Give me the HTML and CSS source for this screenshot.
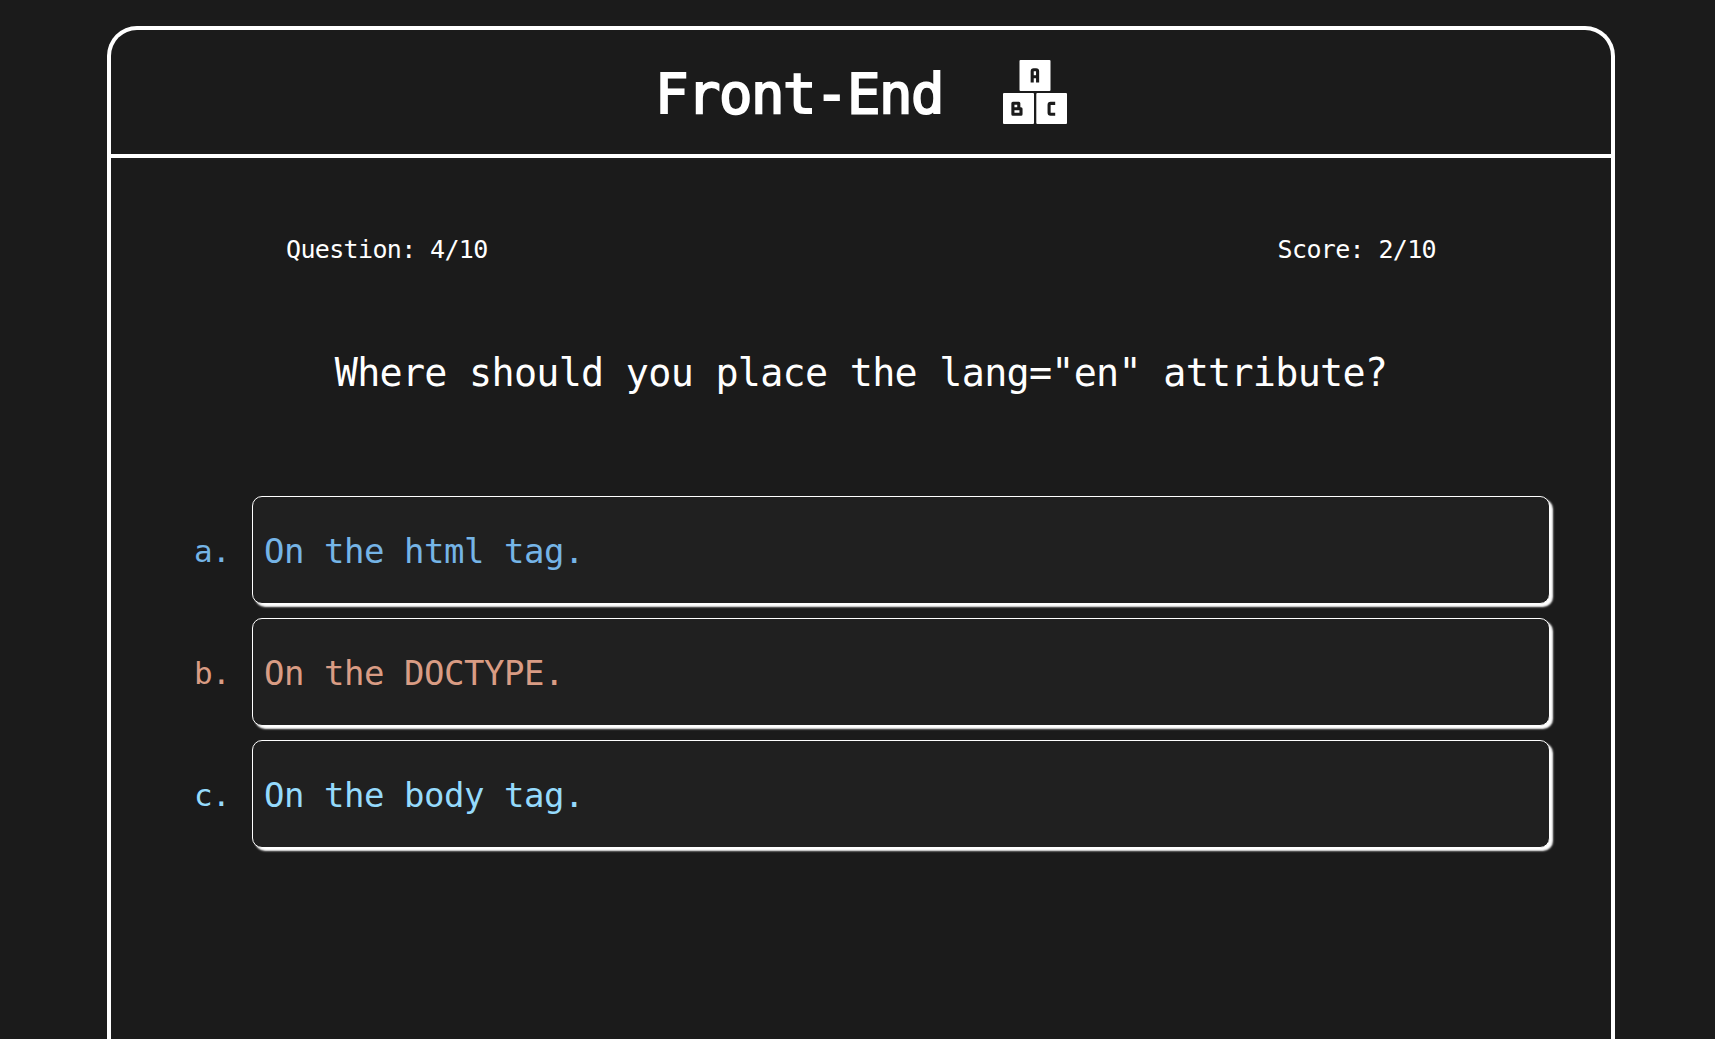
FILE: index.html
```html
<!DOCTYPE html>
<html lang="en">
<head>
<meta charset="utf-8">
<title>Front-End Quiz</title>
<link rel="stylesheet" href="styles.css">
</head>
<body>
<main class="quiz">
  <header class="quiz-header">
    <h1 class="title">Front-End</h1>
    <svg class="blocks" viewBox="0 0 64 64" aria-hidden="true">
      <g fill="#fff">
        <rect x="16.5" y="0" width="31" height="31" rx="1"/>
        <rect x="0" y="33" width="31" height="31" rx="1"/>
        <rect x="33.3" y="33" width="30.7" height="31" rx="1"/>
      </g>
      <g fill="none" stroke="#1b1b1b" stroke-width="3.1" stroke-linejoin="round">
        <path d="M29.2 22.4V11.2Q29.2 9.7 30.7 9.7H33.1Q34.6 9.7 34.6 11.2V22.4M29.2 16.8H34.6"/>
        <path d="M9.9 43.3H15.8V48.7M9.9 43.3V54.2H18V48.7H9.9Z"/>
        <path d="M52.2 43.4H47.6Q46.1 43.4 46.1 44.9V52.7Q46.1 54.2 47.6 54.2H52.2"/>
      </g>
    </svg>
  </header>
  <section class="stats">
    <span>Question: 4/10</span>
    <span>Score: 2/10</span>
  </section>
  <p class="question">Where should you place the lang="en" attribute?</p>
  <ol class="answers">
    <li class="row blue"><span class="marker">a.</span><button class="answer">On the html tag.</button></li>
    <li class="row orange"><span class="marker">b.</span><button class="answer">On the DOCTYPE.</button></li>
    <li class="row sky"><span class="marker">c.</span><button class="answer">On the body tag.</button></li>
  </ol>
</main>
</body>
</html>
```
FILE: styles.css
```css
* { box-sizing: border-box; }

body {
  margin: 0;
  padding: 26px 100px 0 107px;
  height: 100vh;
  background: #1b1b1b;
  color: #fff;
  font-family: "DejaVu Sans Mono", monospace;
}

.quiz {
  height: 100%;
  border: 4px solid #fff;
  border-bottom: 0;
  border-radius: 30px 30px 0 0;
}

.quiz-header {
  display: flex;
  justify-content: center;
  align-items: center;
  gap: 60px;
  height: 128px;
  border-bottom: 4px solid #fff;
}

.title {
  margin: 0;
  padding-top: 4px;
  font-size: 55.6px;
  font-weight: 400;
  line-height: 64px;
  letter-spacing: -1.47px;
  -webkit-text-stroke: 2px #fff;
}

.blocks {
  width: 64px;
  height: 64px;
}

.stats {
  display: flex;
  justify-content: space-between;
  padding: 76px 175px 0;
  font-size: 25px;
  line-height: 32px;
  letter-spacing: -0.65px;
}

.question {
  margin: 81px 0 97px;
  text-align: center;
  font-size: 38.4px;
  line-height: 52px;
  letter-spacing: -0.72px;
}

.answers {
  display: flex;
  flex-direction: column;
  gap: 14px;
  margin: 0;
  padding: 0 61px 0 83px;
  list-style: none;
}

.row {
  display: flex;
  align-items: center;
  height: 108px;
}

.marker {
  width: 58px;
  padding-top: 2px;
  font-size: 31px;
  line-height: 40px;
  letter-spacing: -0.6px;
}

.answer {
  flex: 1;
  height: 108px;
  padding: 2px 11px 0;
  border: 1px solid #fff;
  border-radius: 10px;
  background: #202020;
  box-shadow: 3px 3px 2px #fff;
  color: inherit;
  font: 34px "DejaVu Sans Mono", monospace;
  letter-spacing: -0.47px;
  text-align: left;
}

.blue { color: #75b4e6; }
.orange { color: #d99c84; }
.sky { color: #95dafc; }
```
